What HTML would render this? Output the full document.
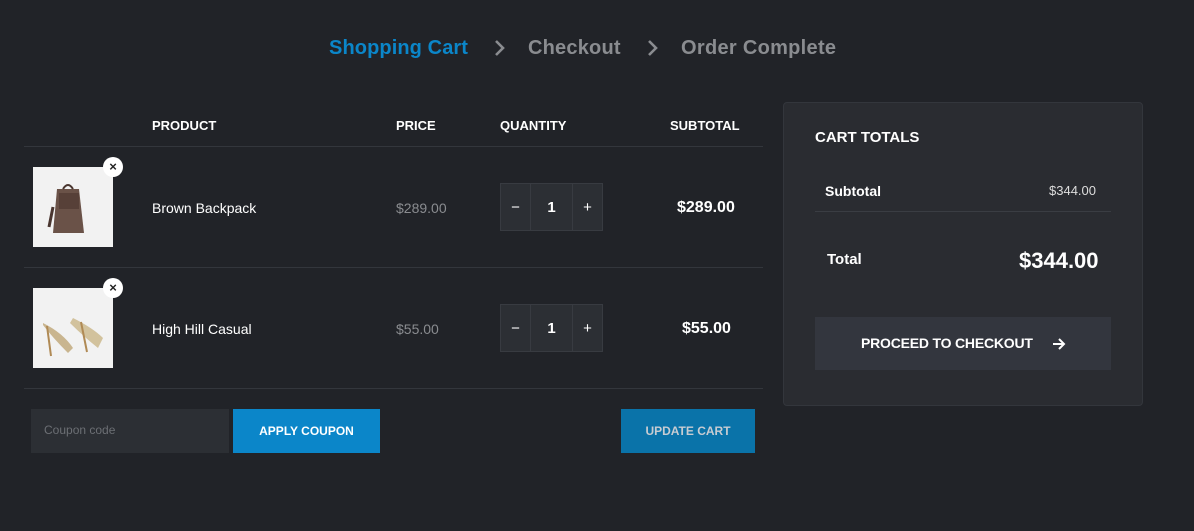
<!DOCTYPE html>
<html><head><style>
body{margin:0;width:1194px;height:531px;background:#212328;font-family:"Liberation Sans",sans-serif;color:#fff;position:relative;overflow:hidden}
.a{position:absolute;white-space:nowrap}
.hd{font-size:13px;font-weight:bold;top:118px}
.line{position:absolute;height:1px;background:#33363c}
.img{position:absolute;width:80px;height:80px;background:#f2f2f2}
.x{position:absolute;width:20px;height:20px;border-radius:50%;background:#fff;color:#222;font-size:13px;font-weight:bold;text-align:center;line-height:20px}
.q{position:absolute;left:500px;width:101px;height:46px;border:1px solid #383b41;background:#2c2f34;display:flex}
.q div{display:flex;align-items:center;justify-content:center;color:#fff;font-size:15px}
.q .m{width:29px;border-right:1px solid #383b41}
.q .n{width:41px;border-right:1px solid #383b41;font-weight:bold}
.q .p{width:29px}
</style></head><body>
<div class="a" style="left:329px;top:37px;font-size:20px;font-weight:bold;color:#0b86c9;letter-spacing:0.1px">Shopping Cart</div>
<svg class="a" style="left:494px;top:39px" width="12" height="18"><path d="M2 2l7 7-7 7" stroke="#8a8c90" stroke-width="2.6" fill="none"/></svg>
<div class="a" style="left:528px;top:37px;font-size:20px;font-weight:bold;color:#8a8c90;letter-spacing:0.2px">Checkout</div>
<svg class="a" style="left:647px;top:39px" width="12" height="18"><path d="M2 2l7 7-7 7" stroke="#8a8c90" stroke-width="2.6" fill="none"/></svg>
<div class="a" style="left:681px;top:37px;font-size:20px;font-weight:bold;color:#8a8c90;letter-spacing:0.3px">Order Complete</div>

<div class="a hd" style="left:152px">PRODUCT</div>
<div class="a hd" style="left:396px">PRICE</div>
<div class="a hd" style="left:500px">QUANTITY</div>
<div class="a hd" style="left:670px">SUBTOTAL</div>
<div class="line" style="left:24px;top:146px;width:739px"></div>
<div class="line" style="left:24px;top:267px;width:739px"></div>
<div class="line" style="left:24px;top:388px;width:739px"></div>

<div class="img" style="left:33px;top:167px"><svg width="80" height="80"><path d="M24 22h22l5 44H20z" fill="#6a5248"/><path d="M30 22q5-8 10 0" stroke="#4a3630" fill="none" stroke-width="2"/><rect x="26" y="26" width="20" height="16" fill="#574038"/><path d="M20 40l-4 20" stroke="#4a3630" stroke-width="3"/></svg></div>
<div class="x" style="left:103px;top:157px">×</div>
<div class="a" style="left:152px;top:200px;font-size:14px">Brown Backpack</div>
<div class="a" style="left:396px;top:200px;font-size:14px;color:#8a8c90">$289.00</div>
<div class="q" style="top:183px"><div class="m">−</div><div class="n">1</div><div class="p">+</div></div>
<div class="a" style="left:677px;top:199px;font-size:16px;font-weight:bold">$289.00</div>

<div class="img" style="left:33px;top:288px"><svg width="80" height="80"><path d="M10 35q20 10 30 25l-5 5q-15-15-25-28z" fill="#c9b58f"/><path d="M40 30q20 10 30 20l-5 10q-15-12-28-25z" fill="#d2c29d"/><path d="M14 38l4 30M48 34l6 30" stroke="#b08a55" stroke-width="2"/></svg></div>
<div class="x" style="left:103px;top:278px">×</div>
<div class="a" style="left:152px;top:321px;font-size:14px">High Hill Casual</div>
<div class="a" style="left:396px;top:321px;font-size:14px;color:#8a8c90">$55.00</div>
<div class="q" style="top:304px"><div class="m">−</div><div class="n">1</div><div class="p">+</div></div>
<div class="a" style="left:682px;top:320px;font-size:16px;font-weight:bold">$55.00</div>

<div class="a" style="left:31px;top:409px;width:198px;height:44px;background:#2c2f34"><span style="position:absolute;left:13px;top:14px;font-size:12px;color:#6c6f74">Coupon code</span></div>
<div class="a" style="left:233px;top:409px;width:147px;height:44px;background:#0b86c9;font-size:12px;font-weight:bold;text-align:center;line-height:44px">APPLY COUPON</div>
<div class="a" style="left:621px;top:409px;width:134px;height:44px;background:#0a73a9;font-size:12px;font-weight:bold;text-align:center;line-height:44px;color:#c8ccd2">UPDATE CART</div>

<div class="a" style="left:783px;top:102px;width:358px;height:302px;background:#2a2c31;border:1px solid #33363c;border-radius:4px"></div>
<div class="a" style="left:815px;top:129px;font-size:15px;font-weight:bold">CART TOTALS</div>
<div class="a" style="left:825px;top:183px;font-size:14px;font-weight:bold">Subtotal</div>
<div class="a" style="left:1049px;top:183px;font-size:13px;color:#ddd">$344.00</div>
<div class="line" style="left:815px;top:211px;width:296px;background:#3a3d43"></div>
<div class="a" style="left:827px;top:251px;font-size:15px;font-weight:bold">Total</div>
<div class="a" style="left:1019px;top:248px;font-size:22px;font-weight:bold">$344.00</div>
<div class="a" style="left:815px;top:317px;width:296px;height:53px;background:#33363e"></div>
<div class="a" style="left:861px;top:335px;font-size:14px;font-weight:bold;letter-spacing:-0.2px">PROCEED TO CHECKOUT</div>
<svg class="a" style="left:1052px;top:337px" width="14" height="14"><path d="M1 7h11M7 2l5 5-5 5" stroke="#fff" stroke-width="2" fill="none"/></svg>
</body></html>
